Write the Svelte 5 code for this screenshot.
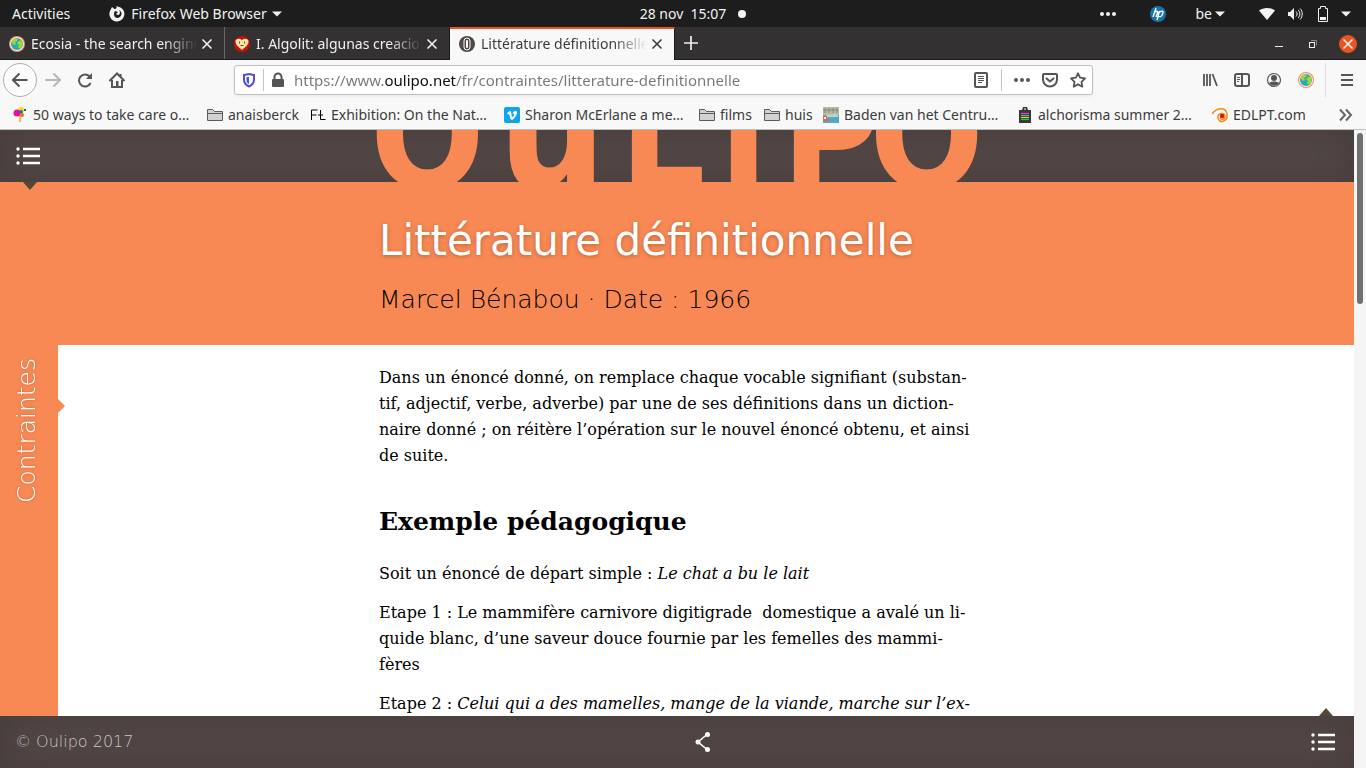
<script lang="ts">
    // Open tabs, the last one is the current page
    let tabs = [
        { icon: 'globe', title: 'Ecosia - the search engine' },
        { icon: 'heart', title: 'I. Algolit: algunas creaciones' },
        { icon: 'oulipo', title: 'Littérature définitionnelle' }
    ];
    let activeTab: number = 2;

    // Bookmarks toolbar
    let bookmarks = [
        { icon: 'balloons', label: '50 ways to take care o…' },
        { icon: 'folder', label: 'anaisberck' },
        { icon: 'fl', label: 'Exhibition: On the Nat…' },
        { icon: 'vimeo', label: 'Sharon McErlane a me…' },
        { icon: 'folder', label: 'films' },
        { icon: 'folder', label: 'huis' },
        { icon: 'baths', label: 'Baden van het Centru…' },
        { icon: 'clipboard', label: 'alchorisma summer 2…' },
        { icon: 'spiral', label: 'EDLPT.com' }
    ];

    let url: string = 'https://www.oulipo.net/fr/contraintes/litterature-definitionnelle';
</script>

{#snippet icon(name: string)}
    <svg class="icon" width="16" height="16" viewBox="0 0 16 16" aria-hidden="true">
        {#if name === 'globe'}
            <circle cx="8" cy="8" r="8" fill="#f58a6c" />
            <circle cx="8" cy="8" r="7" fill="#f8efe0" />
            <circle cx="8" cy="8" r="6" fill="#25abba" />
            <path d="M3 5c2-3 5-3 6-2l-1 2-2 1 1 2-2 1-2-2zM10 5l3-1 1 3-1 3-2 3-2-2 1-2-2-2z" fill="#a8d52c" />
        {:else if name === 'heart'}
            <circle cx="8" cy="8" r="8" fill="#c80e0e" />
            <path d="M8 14C3 10 1.500 8 1.500 5.500c0-3 4-3.500 6.500-1.500 2.500-2 6.500-1.500 6.500 1.500 0 2.500-1.500 4.500-6.500 8.500z" fill="#ffe6a6" />
            <path d="M5.500 5.500v2M10.500 5.500v2M6.500 9.500h3" stroke="#753b1b" fill="none" />
        {:else if name === 'oulipo'}
            <circle cx="8" cy="8" r="8" fill="#514745" />
            <rect x="5" y="2" width="6" height="12" rx="3" fill="none" stroke="#fff" />
            <rect x="7" y="4" width="2" height="8" rx="1" fill="#fff" />
        {:else if name === 'folder'}
            <path d="M.5 13.500v-11h5l2 2h8v9zM.5 6.500h15" fill="#d2d1d3" stroke="#5c5a5c" stroke-linejoin="round" />
        {:else if name === 'balloons'}
            <path d="M8 8v7" stroke="#f7bc52" stroke-width="2" />
            <circle cx="9" cy="3" r="3" fill="#ffd51c" />
            <circle cx="5" cy="6" r="3.500" fill="#f20d93" />
            <circle cx="9" cy="5" r="2" fill="#087ac5" />
            <circle cx="10" cy="8" r="2" fill="#f66c1b" />
            <path d="M12 3h2" stroke="#254f9b" stroke-width="2" />
        {:else if name === 'fl'}
            <path d="M1.500 13V3h6M1.500 8h5M10.500 3v9.500h5M8 8h5" stroke="#000" fill="none" />
        {:else if name === 'vimeo'}
            <rect width="16" height="16" rx="2" fill="#0aa5ee" />
            <path d="M3 6l3-2c2 0 1 5 2.500 6C10 9 11 6 8.500 7c1-4 5-4 4.500-1-.5 3-3 6-5 7-2 0-2-4-3-6l-1 .5z" fill="#fff" />
        {:else if name === 'baths'}
            <rect width="16" height="16" fill="#c6b894" />
            <path d="M0 8h16v8H0z" fill="#55a9bd" />
            <path d="M0 3h15M2 1v5M6 1v5M10 1v5M14 1v5" stroke="#748d93" />
            <path d="M3 8l10-1 3 3H4z" fill="#a9dce0" />
            <path d="M0 9h4v3h3v2H0z" fill="#dc6458" />
            <path d="M1 10h2v2H1z" fill="#fff" />
        {:else if name === 'clipboard'}
            <path d="M2 3h3l1-3h4l1 3h3v13H2z" fill="#383838" />
            <path d="M7 2h2" stroke="#fff" />
            <path d="M4 6.500h8" stroke="#ff3d9c" stroke-width="1.200" />
            <path d="M4 8.500h8" stroke="#22b4f5" stroke-width="1.200" />
            <path d="M4 10.500h8" stroke="#ffcb1c" stroke-width="1.200" />
            <path d="M4 12.500h8" stroke="#14d23f" stroke-width="1.200" />
        {:else if name === 'spiral'}
            <path d="M0 7C5 0 14 0 15 7c1 8-8 10-9 4-1-5 6-6 7-2 0 4-4 4-5 2" fill="none" stroke="#f58b10" stroke-width="1.500" />
            <rect x="8" y="7" width="4" height="4" rx="1" fill="#e81010" />
        {:else if name === 'close'}
            <path d="M3.500 3.500l9 9M12.500 3.500l-9 9" fill="none" stroke="currentColor" stroke-width="1.600" />
        {:else if name === 'plus'}
            <path d="M8 1v14M1 8h14" stroke="currentColor" stroke-width="1.700" />
        {:else if name === 'back'}
            <path d="M15.500 8H1M7.500 1.500L1 8l6.500 6.500" fill="none" stroke="currentColor" stroke-width="2" />
        {:else if name === 'forward'}
            <path d="M0 8h15M8.500 1.500L15 8l-6.500 6.500" fill="none" stroke="currentColor" stroke-width="2" />
        {:else if name === 'reload'}
            <path d="M12.500 4.500A6 6 0 1 0 13.500 11" fill="none" stroke="currentColor" stroke-width="2" />
            <path d="M15 1v6H9z" fill="currentColor" />
        {:else if name === 'home'}
            <path d="M1 8.500L8 1.500l7 7" fill="none" stroke="currentColor" stroke-width="2" stroke-linecap="round" />
            <path d="M3 8v7h10V8M11.500 2v3" fill="none" stroke="currentColor" stroke-width="2" />
            <path d="M7 9h2.500v5H7z" fill="currentColor" />
        {:else if name === 'shield'}
            <path d="M8 2C6 2.500 4.500 3 3 3v5c0 3 2 5 5 6.500 3-1.500 5-3.500 5-6.500V3c-1.500 0-3-.5-5-1z" fill="none" stroke="#5548df" stroke-width="2" />
            <path d="M8 5v7c-2-1-2.500-2-2.500-4V5z" fill="#3558df" />
        {:else if name === 'lock'}
            <path d="M4.500 7V5a3.500 3.500 0 0 1 7 0v2" fill="none" stroke="currentColor" stroke-width="2" />
            <rect x="2" y="7" width="12" height="8" rx="1" fill="currentColor" />
        {:else if name === 'reader'}
            <rect x="2" y="1" width="12" height="14" rx="1" fill="none" stroke="currentColor" stroke-width="2" />
            <path d="M5 4.500h6M5 6.500h6M5 8.500h6M5 10.500h4" stroke="currentColor" />
        {:else if name === 'dots'}
            <path d="M2 6a2 2 0 1 0 0 4 2 2 0 0 0 0-4zM8 6a2 2 0 1 0 0 4 2 2 0 0 0 0-4zM14 6a2 2 0 1 0 0 4 2 2 0 0 0 0-4z" fill="currentColor" />
        {:else if name === 'pocket'}
            <path d="M2 2h12a1 1 0 0 1 1 1v4.500a7 7 0 0 1-14 0V3a1 1 0 0 1 1-1z" fill="none" stroke="currentColor" stroke-width="2" />
            <path d="M4.500 6.500L8 9.500l3.500-3" fill="none" stroke="currentColor" stroke-width="2" stroke-linecap="round" />
        {:else if name === 'star'}
            <path d="M8 1.300l2.100 4.400 4.900.7-3.500 3.400.8 4.900L8 12.400l-4.300 2.300.8-4.900L1 6.400l4.900-.7z" fill="none" stroke="currentColor" stroke-width="1.800" stroke-linejoin="round" />
        {:else if name === 'library'}
            <path d="M2 2v12M5 2v12M8 2v12M10.500 2l4.500 12" stroke="currentColor" stroke-width="1.800" />
        {:else if name === 'sidebar'}
            <rect x="1" y="2" width="14" height="12" rx="2" fill="none" stroke="currentColor" stroke-width="2" />
            <path d="M8 2v12" stroke="currentColor" stroke-width="2" />
            <path d="M3 5.500h3M3 7.500h3M3 9.500h2" stroke="currentColor" />
        {:else if name === 'account'}
            <circle cx="8" cy="8" r="6.500" fill="none" stroke="currentColor" stroke-width="1.200" />
            <circle cx="8" cy="6" r="3" fill="currentColor" />
            <path d="M3 11c2-2 8-2 10 0-2 3.500-8 3.500-10 0z" fill="currentColor" />
        {:else if name === 'menu'}
            <path d="M2 3h12M2 8h12M2 13h12" stroke="currentColor" stroke-width="2" />
        {:else if name === 'more'}
            <path d="M2 2.500l5 5.500-5 5.500M8 2.500l5 5.500-5 5.500" fill="none" stroke="currentColor" stroke-width="2" />
        {:else if name === 'firefox'}
            <path d="M3 1L1 5a7.500 7.500 0 1 0 12-2.500C11 1 9 1 7.500 0 8 2 7 3 5.500 3zM6 5l3 1-2 2c2 2 4 1 4-2l-1-2c4 2 3 7-1 8-4 0-5-4-3-7z" fill="#f2f2f2" fill-rule="evenodd" />
        {:else if name === 'caret'}
            <path d="M3 5.500h10L8 10.500z" fill="currentColor" />
        {:else if name === 'hp'}
            <circle cx="8" cy="8" r="8" fill="#1573ae" />
            <path d="M6 2L3 11M5 6c3-2 3 0 2 2l-1 3M9.500 5L7 14M9.500 6c4-2 4 0 3 2-1 3-2 3-4 2.500" fill="none" stroke="#fff" stroke-width="1.400" />
        {:else if name === 'wifi'}
            <path d="M0 4.500C4 1 12 1 16 4.500L8 14z" fill="currentColor" />
        {:else if name === 'sound'}
            <path d="M1 6h2l4-4v12l-4-4H1z" fill="currentColor" />
            <path d="M9 5.500c1.500 1.500 1.500 3.500 0 5M11 4c2.500 2 2.500 6 0 8M13 2.500c3 3 3 8 0 11" fill="none" stroke="currentColor" />
        {:else if name === 'battery'}
            <path d="M5.500 2.500v-2h5v2h2v13h-9v-13z" fill="none" stroke="currentColor" />
            <path d="M5 11h6v3H5z" fill="currentColor" />
        {:else if name === 'minimize'}
            <path d="M4 10.500h8" stroke="currentColor" />
        {:else if name === 'restore'}
            <rect x="4.500" y="6.500" width="5" height="5" fill="none" stroke="currentColor" />
            <path d="M6 4.500h5.500v5" fill="none" stroke="#8a8888" />
        {/if}
    </svg>
{/snippet}

{#snippet listIcon()}
    <svg width="24" height="18" viewBox="0 0 24 18" aria-hidden="true">
        <path d="M7 2h17M7 9h17M7 16h17" stroke="#fff" stroke-width="2.500" />
        <circle cx="2" cy="2" r="1.700" fill="#fff" />
        <circle cx="2" cy="9" r="1.700" fill="#fff" />
        <circle cx="2" cy="16" r="1.700" fill="#fff" />
    </svg>
{/snippet}

<div class="desktop">
    <!-- System panel -->
    <header class="panel">
        <div class="panel-left">
            <button>Activities</button>
            <button class="app">{@render icon('firefox')}Firefox Web Browser{@render icon('caret')}</button>
        </div>
        <time>28 nov&nbsp; 15:07</time>
        <div class="panel-right">
            <span class="notice"></span>
            <button aria-label="Indicators">{@render icon('dots')}</button>
            <button class="hp" aria-label="HP">{@render icon('hp')}</button>
            <button>be{@render icon('caret')}</button>
            <button class="status" aria-label="System menu">
                {@render icon('wifi')}
                {@render icon('sound')}
                {@render icon('battery')}
                {@render icon('caret')}
            </button>
        </div>
    </header>

    <!-- Tab strip -->
    <div class="tabs">
        {#each tabs as tab, i}
            <div class="tab {i === activeTab ? 'active' : ''}">
                {@render icon(tab.icon)}
                <button class="tab-title" on:click={() => (activeTab = i)}>{tab.title}</button>
                <button aria-label="Close tab">{@render icon('close')}</button>
            </div>
        {/each}
        <button class="new-tab" aria-label="New tab">{@render icon('plus')}</button>
        <div class="window-buttons">
            <button aria-label="Minimize">{@render icon('minimize')}</button>
            <button aria-label="Restore">{@render icon('restore')}</button>
            <button class="quit" aria-label="Close window">{@render icon('close')}</button>
        </div>
    </div>

    <!-- Navigation toolbar -->
    <div class="toolbar">
        <nav class="nav">
            <button class="back" aria-label="Back">{@render icon('back')}</button>
            <button class="forward" aria-label="Forward">{@render icon('forward')}</button>
            <button aria-label="Reload">{@render icon('reload')}</button>
            <button aria-label="Home">{@render icon('home')}</button>
        </nav>
        <div class="url-bar">
            <button aria-label="Protection">{@render icon('shield')}</button>
            <span class="divider"></span>
            <button aria-label="Site information">{@render icon('lock')}</button>
            <input type="text" aria-label="Address" bind:value={url} />
            <div class="page-actions">
                <button aria-label="Reader view">{@render icon('reader')}</button>
                <span class="divider"></span>
                <button aria-label="Page actions">{@render icon('dots')}</button>
                <button aria-label="Save to Pocket">{@render icon('pocket')}</button>
                <button aria-label="Bookmark">{@render icon('star')}</button>
            </div>
        </div>
        <div class="tools">
            <button aria-label="Library">{@render icon('library')}</button>
            <button aria-label="Sidebars">{@render icon('sidebar')}</button>
            <button aria-label="Account">{@render icon('account')}</button>
            <button aria-label="Ecosia">{@render icon('globe')}</button>
            <button class="menu" aria-label="Menu">{@render icon('menu')}</button>
        </div>
    </div>

    <!-- Bookmarks toolbar -->
    <div class="bookmarks">
        {#each bookmarks as bookmark}
            <a href="#bookmark">{@render icon(bookmark.icon)}<span>{bookmark.label}</span></a>
        {/each}
        <button aria-label="More bookmarks">{@render icon('more')}</button>
    </div>

    <!-- Web page -->
    <div class="viewport">
        <div class="page">
            <header class="site-bar top">
                <button class="site-menu" aria-label="Menu">{@render listIcon()}</button>
                <a class="logo" href="#home" aria-label="OULIPO">
                    <span>O</span><span class="round">u</span><span>L</span><span>I</span><span class="tight">P</span><span>O</span>
                </a>
            </header>
            <div class="hero">
                <div class="column">
                    <h1>Littérature définitionnelle</h1>
                    <p>Marcel Bénabou · Date : 1966</p>
                </div>
            </div>
            <div class="content">
                <aside><a href="#contraintes">Contraintes</a></aside>
                <article class="column">
                    <p>
                        Dans un énoncé donné, on remplace chaque vocable signifiant (substan-<br />
                        tif, adjectif, verbe, adverbe) par une de ses définitions dans un diction-<br />
                        naire donné ; on réitère l’opération sur le nouvel énoncé obtenu, et ainsi<br />
                        de suite.
                    </p>
                    <h2>Exemple pédagogique</h2>
                    <p>Soit un énoncé de départ simple : <em>Le chat a bu le lait</em></p>
                    <p>
                        Etape 1 : Le mammifère carnivore digitigrade&nbsp; domestique a avalé un li-<br />
                        quide blanc, d’une saveur douce fournie par les femelles des mammi-<br />
                        fères
                    </p>
                    <p>Etape 2 : <em>Celui qui a des mamelles, mange de la viande, marche sur l’ex-</em></p>
                </article>
            </div>
            <footer class="site-bar bottom">
                <span>© Oulipo 2017</span>
                <button class="share" aria-label="Share">
                    <svg width="16" height="20" viewBox="0 0 16 20" aria-hidden="true">
                        <path d="M12 2.500L3 10l9 7.500" fill="none" stroke="#fff" stroke-width="1.600" />
                        <circle cx="12.500" cy="2.500" r="2.500" fill="#fff" />
                        <circle cx="3" cy="10" r="2.500" fill="#fff" />
                        <circle cx="12.500" cy="17.500" r="2.500" fill="#fff" />
                    </svg>
                </button>
                <button class="site-menu" aria-label="Contents">{@render listIcon()}</button>
            </footer>
        </div>
        <div class="scrollbar"><div class="thumb"></div></div>
    </div>
</div>

<style>
    :global(body) {
        margin: 0;
    }

    .desktop {
        display: flex;
        flex-direction: column;
        height: 100vh;
        overflow: hidden;
        font-family: 'Noto Sans', 'Open Sans', sans-serif;
        font-size: 14px;
        line-height: 20px;
    }

    .desktop * {
        box-sizing: border-box;
    }

    button {
        display: flex;
        align-items: center;
        flex: none;
        padding: 0;
        border: 0;
        background: none;
        color: inherit;
        font: inherit;
        cursor: pointer;
    }

    a {
        color: inherit;
        text-decoration: none;
    }

    svg {
        display: block;
        flex: none;
    }

    .panel {
        display: grid;
        grid-template-columns: 1fr auto 1fr;
        align-items: center;
        flex: 0 0 27px;
        background: #1d1d1d;
        color: #f2f2f2;
    }

    .panel-left,
    .panel-right {
        display: flex;
        align-items: center;
    }

    .panel-left {
        gap: 39px;
        padding-left: 12px;
    }

    .app {
        gap: 6px;
    }

    .app .icon:last-child {
        margin-left: -4px;
    }

    .panel-right {
        padding-right: 12px;
    }

    .notice {
        width: 8px;
        height: 8px;
        margin: 0 auto 0 12px;
        border-radius: 50%;
        background: #f2f2f2;
    }

    .hp {
        margin: 0 29px 0 34px;
    }

    .status {
        gap: 12px;
        margin-left: 31px;
    }

    .status .icon:last-child {
        margin-left: -5px;
    }

    .tabs {
        display: flex;
        flex: 0 0 33px;
        background: #333132;
        border-bottom: 1px solid #1b1b1b;
        color: #f0f0f0;
    }

    .tab {
        display: flex;
        align-items: center;
        gap: 6px;
        width: 225px;
        padding: 2px 9px 0;
        border-right: 1px solid #69676a;
    }

    .tab.active {
        margin-bottom: -1px;
        padding: 0 9px 1px;
        border-top: 2px solid #e95420;
        border-right-color: #1b1b1b;
        background: #f8f8f8;
        color: #3c3c3c;
    }

    .tab:nth-child(2) {
        border-right-color: #1b1b1b;
    }

    .tab-title {
        flex: 1;
        min-width: 0;
        margin-right: -4px;
        overflow: hidden;
        white-space: nowrap;
        mask-image: linear-gradient(to right, #000 80%, transparent);
    }

    .new-tab {
        padding: 0 8px;
    }

    .window-buttons {
        display: flex;
        align-items: center;
        gap: 18px;
        margin-left: auto;
        padding-right: 9px;
        padding-top: 2px;
    }

    .quit {
        justify-content: center;
        width: 18px;
        height: 18px;
        border-radius: 50%;
        background: #e95420;
    }

    .toolbar {
        display: flex;
        align-items: center;
        flex: 0 0 40px;
        background: #f8f8f8;
        color: #555;
    }

    .nav {
        display: flex;
        align-items: center;
        gap: 16px;
        width: 234px;
        padding-left: 3px;
    }

    .back {
        justify-content: center;
        width: 34px;
        height: 34px;
        margin-right: -8px;
        border: 1px solid #b0b0b0;
        border-radius: 50%;
        background: #fcfcfc;
    }

    .forward {
        color: #b8b8b8;
    }

    .url-bar {
        display: flex;
        align-items: center;
        flex: 1;
        gap: 6px;
        height: 30px;
        padding: 0 6px;
        border: 1px solid #c0c0c0;
        border-radius: 3px;
        background: #fff;
        box-shadow: 0 1px 3px #0001;
    }

    .page-actions {
        display: flex;
        align-items: center;
        gap: 12px;
    }

    .divider {
        width: 1px;
        height: 22px;
        background: #c4c4c4;
    }

    /* The host name is darker than the rest of the address */
    .url-bar input {
        flex: 1;
        min-width: 0;
        padding: 0 0 0 2px;
        border: 0;
        outline: 0;
        background: linear-gradient(to right, #777 93px, #0c0c0d 93px, #0c0c0d 164px, #777 164px);
        background-clip: text;
        color: transparent;
        font: inherit;
        font-size: 15px;
    }

    .tools {
        display: flex;
        align-items: center;
        gap: 16px;
        width: 273px;
        justify-content: flex-end;
        padding-right: 11px;
    }

    .menu {
        height: 34px;
        margin-left: -5px;
        padding-left: 13px;
        border-left: 1px solid #ddd;
    }

    .bookmarks {
        display: grid;
        grid-template-columns: 195px 103px 194px 195px 65px 59px 194px 195px auto 1fr;
        align-items: center;
        flex: 0 0 30px;
        padding: 0 12px;
        border-bottom: 1px solid #c0c0c0;
        background: #f8f8f8;
        color: #3c3c3c;
    }

    .bookmarks a {
        display: flex;
        align-items: center;
        gap: 5px;
        white-space: nowrap;
    }

    .bookmarks button {
        justify-self: end;
        color: #666;
    }

    .viewport {
        display: flex;
        flex: 1;
        min-height: 0;
    }

    .page {
        display: flex;
        flex-direction: column;
        flex: 1;
        min-width: 0;
    }

    .scrollbar {
        width: 12px;
        padding: 3px;
        background: #f5f5f5;
    }

    .thumb {
        height: 27%;
        border-radius: 3px;
        background: #707070;
    }

    .site-bar {
        position: relative;
        flex: 0 0 52px;
        background: #534846;
        box-shadow: inset 0 0 40px #3a302e88;
    }

    .site-bar::after {
        content: '';
        position: absolute;
        border: 7px solid transparent;
    }

    .top {
        display: grid;
        grid-template-columns: 58px 1fr 58px;
    }

    .top::after {
        top: 100%;
        left: 23px;
        border-top: 8px solid #554733;
        border-bottom: 0;
    }

    .top .site-menu {
        padding-left: 16px;
    }

    .logo {
        display: flex;
        align-items: flex-end;
        justify-content: space-between;
        width: 100%;
        max-width: 614px;
        height: 52px;
        margin: 0 auto;
        overflow: hidden;
        color: #f88954;
        font: bold 150px/92px 'DejaVu Sans Condensed', 'DejaVu Sans', sans-serif;
    }

    /* Second letter has a straight right stem, drawn larger to the same baseline */
    .round {
        font-size: 170px;
        line-height: 106px;
    }

    .tight {
        margin-right: -24px;
    }

    .hero {
        flex: none;
        padding: 31px 0 28px;
        background: #f88954;
    }

    .column {
        width: 100%;
        max-width: 596px;
        margin: 0 auto;
    }

    h1 {
        margin: 0;
        color: #fff;
        font: 42px/56px 'DejaVu Sans', sans-serif;
        text-shadow: 0 1px 4px #0004;
    }

    .hero p {
        margin: 13px 0 0;
        color: #000;
        font: 200 25px/35px 'DejaVu Sans', sans-serif;
    }

    .content {
        display: grid;
        grid-template-columns: 58px 1fr 58px;
        flex: 1;
        min-height: 0;
        overflow: hidden;
        background: #fff;
    }

    aside {
        position: relative;
        padding: 13px 12px 0;
        background: #f88954;
    }

    aside::after {
        content: '';
        position: absolute;
        top: 54px;
        left: 100%;
        border: 7px solid transparent;
        border-left-color: #f88954;
        border-right: 0;
    }

    aside a {
        display: block;
        color: #fff;
        font: 200 25px/30px 'DejaVu Sans', sans-serif;
        text-shadow: 0 0 3px #0004;
        writing-mode: vertical-rl;
        transform: rotate(180deg);
    }

    article {
        padding-top: 20px;
        color: #000;
        font: 16px/26px 'DejaVu Serif', serif;
    }

    article p {
        margin: 0 0 13px;
        white-space: nowrap;
    }

    h2 {
        margin: 37px 0 23px;
        font: bold 25px/32px 'DejaVu Serif', serif;
    }

    .bottom {
        display: grid;
        grid-template-columns: 1fr auto 1fr;
        align-items: center;
        padding: 0 19px 0 15px;
        color: #cbc4c1;
        font: 200 16px/24px 'DejaVu Sans', sans-serif;
    }

    .share {
        padding-left: 56px;
    }

    .bottom .site-menu {
        justify-self: end;
    }

    .bottom::after {
        right: 21px;
        bottom: 100%;
        border-bottom: 8px solid #554733;
        border-top: 0;
    }
</style>
